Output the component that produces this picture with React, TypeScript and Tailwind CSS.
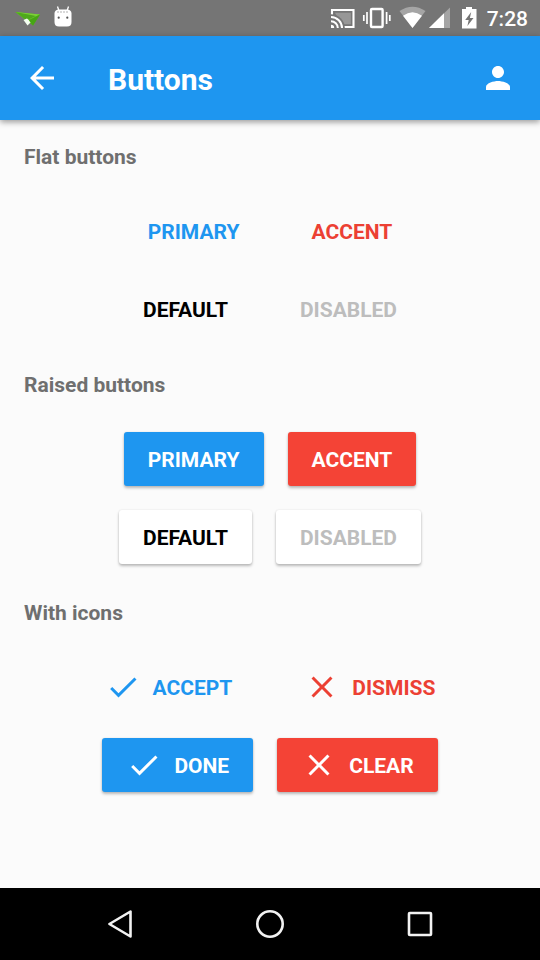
import type { ReactNode } from 'react';

const PATHS = {
  check: 'M9 16.17L4.83 12l-1.42 1.41L9 19 21 7l-1.41-1.41z',
  close: 'M19 6.41L17.59 5 12 10.59 6.41 5 5 6.41 10.59 12 5 17.59 6.41 19 12 13.41 17.59 19 19 17.59 13.41 12z',
  back: 'M20 11H7.83l5.59-5.59L12 4l-8 8 8 8 1.41-1.41L7.83 13H20v-2z',
  person: 'M12 12c2.21 0 4-1.79 4-4s-1.79-4-4-4-4 1.79-4 4 1.79 4 4 4zm0 2c-2.67 0-8 1.34-8 4v2h16v-2c0-2.66-5.33-4-8-4z',
};

function Icon({ name }: { name: keyof typeof PATHS }) {
  return (
    <svg viewBox="0 0 24 24" className="size-9 shrink-0 fill-current">
      <path d={PATHS[name]} />
    </svg>
  );
}

function Button({ className, icon, children }: { className: string; icon?: 'check' | 'close'; children: ReactNode }) {
  return (
    <button className={`flex h-[54px] items-center gap-3 rounded-[3px] px-6 text-[21px] leading-6 font-bold ${className}`}>
      {icon && <Icon name={icon} />}
      <span className="relative top-px">{children}</span>
    </button>
  );
}

const raised = 'shadow-[0_2px_3px_rgba(0,0,0,0.26),0_0_2px_rgba(0,0,0,0.1)]';

function Section({ title, children }: { title: string; children: ReactNode }) {
  return (
    <section>
      <h2 className="flex h-[72px] items-center px-6 pt-1 text-[21px] font-bold text-[#6f6f6f]">{title}</h2>
      {children}
    </section>
  );
}

function Row({ children }: { children: ReactNode }) {
  return <div className="flex h-[78px] items-center justify-center gap-6">{children}</div>;
}

function StatusBar() {
  return (
    <div className="flex h-9 items-center justify-between bg-[#757575] pr-3 text-white">
      <svg width="90" height="36" viewBox="0 0 90 36">
        <path d="M15.5 12L40 14.5L33 25.5L26.5 20.5Z" fill="#55b31d" />
        <path d="M15.5 12L40 14.5L26.5 20.5Z" fill="#7bd236" />
        <path d="M15.5 12L36 16L26.5 20.5Z" fill="#4fa91c" />
        <path d="M23.5 20L27 18.5L31 22L27.5 25.5Z" fill="#f4fff0" />
        <path d="M33 25.5L40 14.5L29 20.5Z" fill="#46a514" />
        <path d="M57.5 6.5L59 11M68.5 6.5L67 11" stroke="#fff" strokeWidth="1.3" />
        <path d="M54.5 13Q55 9.5 59 9.5H67Q71 9.5 71.5 13V22Q71.5 26.5 67 26.5H59Q54.5 26.5 54.5 22Z" fill="#fff" />
        <path d="M57 12H69" stroke="#ccc" strokeWidth="1.5" strokeDasharray="2 1" />
        <circle cx="58.7" cy="17.7" r="1.1" fill="#555" />
        <circle cx="67.3" cy="17.7" r="1.1" fill="#555" />
      </svg>
      <div className="flex h-9 items-center">
        <svg width="157" height="36" viewBox="325 0 157 36" className="mr-1">
          <path d="M331 15V10H352.5V27H340" fill="none" stroke="#fff" strokeWidth="2.1" />
          <path d="M334 12.8H349.8V24.2H340Z" fill="#fff" fillOpacity=".25" />
          <path d="M330 28V14.2A13.8 13.8 0 0 1 343.8 28Z" fill="#757575" />
          <path d="M330 24.8A3.2 3.2 0 0 1 333.2 28H330Z" fill="#fff" />
          <path d="M330 21.2A6.8 6.8 0 0 1 336.8 28M330 17A11 11 0 0 1 341 28" fill="none" stroke="#fff" strokeWidth="2" />
          <rect x="370" y="9" width="11.6" height="18" rx="1" fill="none" stroke="#fff" strokeWidth="2.4" />
          <path d="M366 12V24M362.8 15V21M385.6 12V24M388.8 15V21" stroke="#fff" strokeWidth="1.7" />
          <path d="M398.5 11Q411.5 2.5 424.5 11L411.5 28Z" fill="#fff" fillOpacity=".35" />
          <path d="M402 15.8Q411.5 8.5 421 15.8L411.5 28Z" fill="#fff" />
          <path d="M428 28L449 7.5V28Z" fill="#fff" fillOpacity=".35" />
          <path d="M428 28L443 13.3V28Z" fill="#fff" />
          <path d="M465 7H471V9H475.5V28.5H461V9H465Z" fill="#fff" />
          <path d="M470.2 12L464.2 20H467.7L466.4 26L472.5 18H468.9Z" fill="#757575" />
        </svg>
        <span className="relative top-px text-[21px] leading-6 font-medium">7:28</span>
      </div>
    </div>
  );
}

export default function App() {
  return (
    <div className="flex h-[960px] w-[540px] flex-col overflow-hidden bg-[#fbfbfb] font-['Roboto',sans-serif]">
      <StatusBar />
      <header className="flex h-[84px] shrink-0 items-center bg-[#1e96f0] px-6 text-white shadow-[0_2px_6px_rgba(0,0,0,0.4)]">
        <Icon name="back" />
        <h1 className="ml-12 flex-1 pt-1 text-[30px] leading-9 font-bold">Buttons</h1>
        <Icon name="person" />
      </header>
      <main className="flex-1">
        <Section title="Flat buttons">
          <Row>
            <Button className="text-[#1e96f0]">PRIMARY</Button>
            <Button className="text-[#ec4033]">ACCENT</Button>
          </Row>
          <Row>
            <Button className="text-black">DEFAULT</Button>
            <Button className="text-[#bdbdbd]">DISABLED</Button>
          </Row>
        </Section>
        <Section title="Raised buttons">
          <Row>
            <Button className={`${raised} bg-[#1e96f0] text-white`}>PRIMARY</Button>
            <Button className={`${raised} bg-[#f44336] text-white`}>ACCENT</Button>
          </Row>
          <Row>
            <Button className={`${raised} bg-white text-black`}>DEFAULT</Button>
            <Button className={`${raised} bg-white text-[#bdbdbd]`}>DISABLED</Button>
          </Row>
        </Section>
        <Section title="With icons">
          <Row>
            <Button icon="check" className="text-[#1e96f0]">ACCEPT</Button>
            <Button icon="close" className="text-[#ec4033]">DISMISS</Button>
          </Row>
          <Row>
            <Button icon="check" className={`${raised} bg-[#1e96f0] text-white`}>DONE</Button>
            <Button icon="close" className={`${raised} bg-[#f44336] text-white`}>CLEAR</Button>
          </Row>
        </Section>
      </main>
      <nav className="flex h-[72px] shrink-0 items-center justify-center gap-[114px] bg-black">
        <svg width="36" height="36" viewBox="0 0 36 36" fill="none" stroke="#f2f2f2" strokeWidth="2.6" strokeLinejoin="round">
          <path d="M7.4 18L28.5 5.5V30.5Z" />
        </svg>
        <svg width="36" height="36" viewBox="0 0 36 36" fill="none" stroke="#f2f2f2" strokeWidth="2.6">
          <circle cx="18" cy="18" r="12.7" />
        </svg>
        <svg width="36" height="36" viewBox="0 0 36 36" fill="none" stroke="#f2f2f2" strokeWidth="2.6">
          <rect x="7" y="7" width="22" height="22" rx="0.8" />
        </svg>
      </nav>
    </div>
  );
}
